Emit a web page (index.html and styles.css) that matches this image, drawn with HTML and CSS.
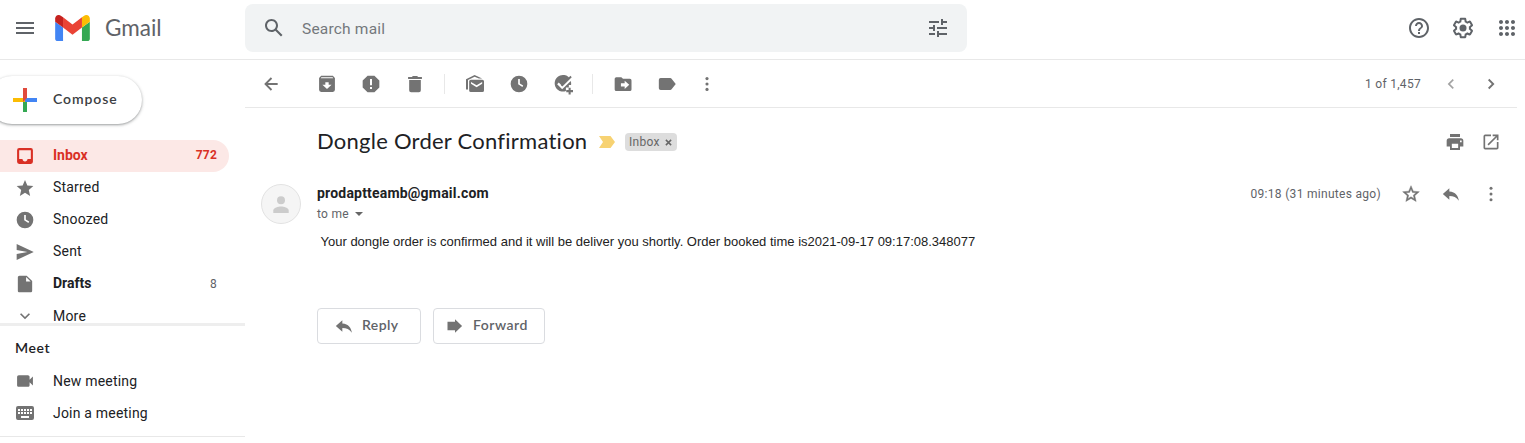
FILE: index.html
```html
<!DOCTYPE html>
<html lang="en">
<head>
<meta charset="utf-8">
<title>Gmail</title>
<link rel="stylesheet" href="styles.css">
</head>
<body>
<header class="header">
  <svg class="icon menu" viewBox="0 0 24 24"><path d="M3 18h18v-2H3v2zm0-5h18v-2H3v2zm0-7v2h18V6H3z"/></svg>
  <svg class="logo" viewBox="52 42 88 66"><path fill="#4285f4" d="M58 108h14V74L52 59v43c0 3.32 2.69 6 6 6"/><path fill="#34a853" d="M120 108h14c3.320 0 6-2.690 6-6V59l-20 15"/><path fill="#fbbc04" d="M120 48v26l20-15v-8c0-7.420-8.470-11.650-14.400-7.200"/><path fill="#ea4335" d="M72 74V48l24 18 24-18v26L96 92"/><path fill="#c5221f" d="M52 51v8l20 15V48l-5.600-4.200c-5.940-4.450-14.400-.22-14.400 7.200"/></svg>
  <span class="brand">Gmail</span>
  <div class="search">
    <svg class="icon i24" viewBox="0 0 24 24"><path d="M20.490 19l-5.730-5.730C15.530 12.200 16 10.910 16 9.500 16 5.910 13.090 3 9.500 3S3 5.910 3 9.500 5.910 16 9.500 16c1.410 0 2.700-.47 3.770-1.240L19 20.490 20.490 19zM5 9.500C5 7.010 7.010 5 9.500 5S14 7.010 14 9.500 11.990 14 9.500 14 5 11.990 5 9.500z"/></svg>
    <span class="search-text">Search mail</span>
    <svg class="icon i24 tune" viewBox="0 0 24 24"><path d="M3 17v2h6v-2H3zM3 5v2h10V5H3zm10 16v-2h8v-2h-8v-2h-2v6h2zM7 9v2H3v2h4v2h2V9H7zm14 4v-2H11v2h10zm-6-4h2V7h4V5h-4V3h-2v6z"/></svg>
  </div>
  <div class="header-tools">
    <svg class="icon i24" viewBox="0 0 24 24"><path d="M11 18h2v-2h-2v2zm1-16C6.480 2 2 6.480 2 12s4.480 10 10 10 10-4.480 10-10S17.520 2 12 2zm0 18c-4.410 0-8-3.590-8-8s3.590-8 8-8 8 3.590 8 8-3.590 8-8 8zm0-14c-2.210 0-4 1.790-4 4h2c0-1.100.9-2 2-2s2 .9 2 2c0 2-3 1.750-3 5h2c0-2.250 3-2.500 3-5 0-2.210-1.790-4-4-4z"/></svg>
    <svg class="icon i24" viewBox="0 0 24 24"><path d="M13.850 22.250h-3.700c-.74 0-1.360-.54-1.450-1.270l-.27-1.890c-.27-.14-.53-.29-.79-.46l-1.800.72c-.7.26-1.470-.03-1.810-.65L2.200 15.530c-.35-.66-.2-1.440.36-1.880l1.530-1.190c-.01-.15-.02-.3-.02-.46 0-.15.010-.31.020-.46l-1.520-1.190c-.59-.45-.74-1.260-.37-1.880l1.850-3.190c.34-.62 1.110-.9 1.790-.63l1.810.73c.26-.17.520-.32.780-.46l.27-1.910c.09-.7.710-1.250 1.440-1.250h3.700c.74 0 1.360.54 1.450 1.270l.27 1.890c.27.14.530.29.790.46l1.800-.72c.71-.26 1.480.03 1.820.65l1.840 3.180c.36.66.2 1.440-.36 1.880l-1.520 1.190c.01.15.020.3.020.46s-.01.31-.02.46l1.520 1.190c.56.45.720 1.230.370 1.860l-1.860 3.220c-.34.62-1.110.9-1.800.63l-1.800-.72c-.26.17-.52.320-.78.460l-.27 1.910c-.1.680-.72 1.220-1.460 1.220zm-3.230-2h2.760l.37-2.550.53-.22c.44-.18.880-.44 1.340-.78l.45-.34 2.380.96 1.380-2.400-2.030-1.580.07-.56c.03-.26.060-.51.060-.78s-.03-.53-.06-.78l-.07-.56 2.030-1.580-1.390-2.400-2.390.96-.45-.35c-.42-.32-.87-.58-1.330-.77l-.52-.22-.37-2.550h-2.760l-.37 2.550-.53.210c-.44.19-.88.440-1.340.790l-.45.330-2.380-.95-1.390 2.390 2.030 1.580-.07.560a7 7 0 0 0 0 1.560l.07.560-2.030 1.580 1.380 2.400 2.390-.96.45.350c.43.330.860.580 1.330.770l.53.220z"/><circle cx="12" cy="12" r="3.500"/></svg>
    <svg class="icon i24" viewBox="0 0 24 24"><path d="M6 8c1.100 0 2-.9 2-2s-.9-2-2-2-2 .9-2 2 .9 2 2 2zm6 12c1.100 0 2-.9 2-2s-.9-2-2-2-2 .9-2 2 .9 2 2 2zm-6 0c1.100 0 2-.9 2-2s-.9-2-2-2-2 .9-2 2 .9 2 2 2zm0-6c1.100 0 2-.9 2-2s-.9-2-2-2-2 .9-2 2 .9 2 2 2zm6 0c1.100 0 2-.9 2-2s-.9-2-2-2-2 .9-2 2 .9 2 2 2zm4-8c0 1.100.9 2 2 2s2-.9 2-2-.9-2-2-2-2 .9-2 2zm-4 2c1.100 0 2-.9 2-2s-.9-2-2-2-2 .9-2 2 .9 2 2 2zm6 6c1.100 0 2-.9 2-2s-.9-2-2-2-2 .9-2 2 .9 2 2 2zm0 6c1.100 0 2-.9 2-2s-.9-2-2-2-2 .9-2 2 .9 2 2 2z"/></svg>
  </div>
</header>
<div class="layout">
  <aside class="sidebar">
    <div class="compose">
      <svg class="plus" viewBox="0 0 24 24"><path fill="#34a853" d="M10 12h4v12h-4z"/><path fill="#4285f4" d="M12 10h12v4H12z"/><path fill="#fbbc04" d="M0 10h12v4H0z"/><path fill="#e04a3c" d="M10 0h4v10l-4 4z"/></svg>
      <span class="compose-text">Compose</span>
    </div>
    <nav class="nav">
      <div class="item active"><svg class="icon" viewBox="0 0 24 24"><path d="M19 2.500H5A2.500 2.500 0 0 0 2.500 5v14A2.500 2.500 0 0 0 5 21.500h14a2.500 2.500 0 0 0 2.500-2.500V5A2.500 2.500 0 0 0 19 2.500zM19 15.500h-4c0 1.660-1.340 3-3 3s-3-1.340-3-3H5V5h14v10.500z"/></svg><span class="label">Inbox</span><span class="count">772</span></div>
      <div class="item"><svg class="icon" viewBox="0 0 24 24"><path d="M12 17.770l6.180 3.730-1.640-7.030L22 9.740l-7.190-.61L12 2.500 9.190 9.130 2 9.740l5.460 4.730-1.640 7.030z"/></svg><span class="label">Starred</span></div>
      <div class="item"><svg class="icon" viewBox="0 0 24 24"><path fill-rule="evenodd" d="M12 2a10 10 0 1 0 0 20 10 10 0 0 0 0-20zM11 6h2v5.400l4 2.400-.9 1.700-5.100-3.100z"/></svg><span class="label">Snoozed</span></div>
      <div class="item"><svg class="icon" viewBox="0 0 24 24"><path d="M2 21.500L22.500 12 2 2.500v7.200L15 12 2 14.300z"/></svg><span class="label">Sent</span></div>
      <div class="item bold"><svg class="icon" viewBox="0 0 24 24"><path d="M14 2H5.500c-1.300 0-2.100.9-2.100 2v16c0 1.100.8 2 2.100 2h13c1.200 0 2.100-.9 2.100-2V8.500L14 2zm-.7 7V3.700L18.800 9z"/></svg><span class="label">Drafts</span><span class="count">8</span></div>
      <div class="item"><svg class="icon" viewBox="0 0 24 24"><path d="M7.410 8.590L12 13.170l4.590-4.580L18 10l-6 6-6-6z"/></svg><span class="label more-label">More</span></div>
    </nav>
    <section class="meet">
      <h2 class="meet-title">Meet</h2>
      <div class="item"><svg class="icon" viewBox="0 0 24 24"><path d="M17.500 10.480V7c0-1.100-.9-2-2-2H4.500a2 2 0 0 0-2 2v10c0 1.100.9 2 2 2h11c1.100 0 2-.9 2-2v-3.480l4 3.980v-11z"/></svg><span class="label">New meeting</span></div>
      <div class="item"><svg class="icon keyboard" viewBox="0 0 20 20"><path fill-rule="evenodd" d="M3 3h14a2 2 0 0 1 2 2v10a2 2 0 0 1-2 2H3a2 2 0 0 1-2-2V5a2 2 0 0 1 2-2zM3 6v2h2V6zm3 0v2h2V6zM9 6v2h2V6zM12 6v2h2V6zM15 6v2h2V6zM3 9v2h2V9zm3 0v2h2V9zm3 0v2h2V9zm3 0v2h2V9zm3 0v2h2V9zM6 13v2h8v-2z"/></svg><span class="label">Join a meeting</span></div>
    </section>
  </aside>
  <main class="main">
    <div class="toolbar">
      <svg class="icon back" viewBox="0 0 24 24"><path d="M20 10.800H8.200l5.220-5.220L11.800 4l-8 8 8 8 1.620-1.580L8.200 13.200H20z"/></svg>
      <div class="group">
        <svg class="icon" viewBox="0 0 24 24"><path fill-rule="evenodd" d="M5 2.200h14l2.500 2.600V19a2.500 2.500 0 0 1-2.500 2.500H5A2.500 2.500 0 0 1 2.500 19V4.800zM5.300 4l-.8 1h15l-.8-1zM10 10v3H6.500l5.500 5 5.500-5H14v-3z"/></svg>
        <svg class="icon" viewBox="0 0 24 24"><path fill-rule="evenodd" d="M7.900 2h8.200L22 7.900v8.200L16.100 22H7.900L2 16.100V7.900zM10.800 6v7.500h2.400V6zm0 9.500V18h2.400v-2.500z"/></svg>
        <svg class="icon" viewBox="0 0 24 24"><path d="M5 19.500a2.300 2.300 0 0 0 2.300 2.300h9.400a2.300 2.300 0 0 0 2.300-2.300V7.200H5zM15.800 3.600L14.500 2.300h-5L8.200 3.600H3.700V6h16.600V3.600z"/></svg>
      </div>
      <i class="divider"></i>
      <div class="group">
        <svg class="icon" viewBox="0 0 24 24"><path fill-rule="evenodd" d="M1.200 18.500V6.200L11.500 1.200 20.500 5.500h-3.800l-5.200-2.200-7.900 4V18.500zM7 6.800h13.800a2 2 0 0 1 2 2v10.900a2 2 0 0 1-2 2H7a2 2 0 0 1-2-2V8.800a2 2 0 0 1 2-2zM7.200 9.500v2.300l6.700 4 6.700-4V9.500l-6.700 4z"/></svg>
        <svg class="icon" viewBox="0 0 24 24"><path fill-rule="evenodd" d="M12 2a10 10 0 1 0 0 20 10 10 0 0 0 0-20zM11 6h2v5.400l4 2.400-.9 1.700-5.100-3.100z"/></svg>
        <svg class="icon task" viewBox="0 0 24 24"><path d="M18.300 4.200A10 10 0 1 0 15.500 21.300v-4.200h3.500v-3h2.700a10 10 0 0 0-.4-5L11 19l-6-6 1.900-1.900 4.100 4.100L20 6.200z" transform="translate(0 -.8)"/><path d="M20.900 2.200l1.600 1.600L11.200 15.100l-1.600-1.600zM18.700 16.500h2.500v2.800h2.800v2.500h-2.800v2.800h-2.500v-2.800h-2.800v-2.500h2.800z"/></svg>
      </div>
      <i class="divider"></i>
      <div class="group">
        <svg class="icon" viewBox="0 0 24 24"><path fill-rule="evenodd" d="M20 5.800h-8l-2-2H4a2 2 0 0 0-2 2V18.500a2 2 0 0 0 2 2h16.200a2 2 0 0 0 2-2V7.800a2 2 0 0 0-2.200-2zM14 18v-3H9.500v-4H14V8l5.500 5z"/></svg>
        <svg class="icon" viewBox="0 0 24 24"><path d="M17.500 5.700c-.35-.5-.95-.9-1.600-.9H4.400a2.300 2.300 0 0 0-2.200 2.200v10a2.300 2.300 0 0 0 2.200 2.200h11.500c.65 0 1.250-.4 1.600-.9L22.500 12z"/></svg>
        <svg class="icon dots" viewBox="0 0 24 24"><circle cx="12" cy="5.500" r="1.900"/><circle cx="12" cy="12" r="1.900"/><circle cx="12" cy="18.500" r="1.900"/></svg>
      </div>
      <div class="pager"><span class="pager-text">1 of 1,457</span><svg class="icon dim" viewBox="0 0 24 24"><path d="M15.410 7.410L14 6l-6 6 6 6 1.410-1.410L10.830 12z"/></svg><svg class="icon" viewBox="0 0 24 24"><path d="M10 5.800L8.400 7.410 12.990 12l-4.590 4.590L10 18.200l6.200-6.200z"/></svg></div>
    </div>
    <div class="subject-row">
      <h1 class="subject">Dongle Order Confirmation</h1>
      <svg class="important" viewBox="0 0 16 12"><path fill="#f7d272" d="M0 0h11.500L16 6l-4.500 6H0l4-6z"/></svg>
      <span class="chip">Inbox<svg class="close" viewBox="0 0 8 8"><path d="M1 1l6 6M7 1L1 7"/></svg></span>
      <div class="row-tools">
        <svg class="icon" viewBox="0 0 24 24"><path fill-rule="evenodd" d="M6 2.500h12V6H6zM5 7.500h14a3 3 0 0 1 3 3v7h-4v4H6v-4H2v-7a3 3 0 0 1 3-3zM8.200 14v5.300h7.600V14zM18 10.200v2h2v-2z"/></svg>
        <svg class="icon" viewBox="0 0 24 24"><path d="M19 19H5V5h7V3H5a2 2 0 0 0-2 2v14a2 2 0 0 0 2 2h14c1.100 0 2-.9 2-2v-7h-2v7zM14 3v2h3.590l-9.830 9.830 1.410 1.410L19 6.410V10h2V3h-7z"/></svg>
      </div>
    </div>
    <article class="message">
      <svg class="avatar" viewBox="0 0 40 40"><circle cx="20" cy="20" r="19.500" fill="#f5f5f5" stroke="#e2e2e2"/><circle cx="20" cy="16.200" r="4" fill="#ccc"/><path fill="#ccc" d="M12.300 29v-2.500c0-2.700 5-4 7.700-4s7.700 1.300 7.700 4V29z"/></svg>
      <div class="content">
        <div class="sender-row">
          <span class="sender">prodaptteamb@gmail.com</span>
          <div class="meta"><span class="date">09:18 (31 minutes ago)</span>
            <svg class="icon" viewBox="0 0 24 24"><path d="M22 9.240l-7.190-.62L12 2 9.190 8.630 2 9.240l5.460 4.730L5.820 21 12 17.270 18.180 21l-1.630-7.030L22 9.240zM12 15.400l-3.760 2.270 1-4.280-3.320-2.880 4.380-.38L12 6.100l1.710 4.040 4.380.38-3.320 2.880 1 4.280L12 15.400z" stroke="#737373" stroke-width=".5"/></svg>
            <svg class="icon" viewBox="0 0 24 24"><path d="M10 9V5l-7.800 7 7.800 7v-4.600c5 0 8.500 1.600 11.500 5.600-1-5.500-4-10.500-11.500-11z"/></svg>
            <svg class="icon" viewBox="0 0 24 24"><circle cx="12" cy="5" r="1.800"/><circle cx="12" cy="12" r="1.800"/><circle cx="12" cy="19" r="1.800"/></svg>
          </div>
        </div>
        <div class="recipient">to me<i class="caret"></i></div>
        <p class="body">Your dongle order is confirmed and it will be deliver you shortly. Order booked time is2021-09-17 09:17:08.348077</p>
        <div class="actions">
          <div class="btn reply"><svg class="icon" viewBox="0 0 24 24"><path d="M10 9V5l-7.800 7 7.800 7v-4.600c5 0 8.500 1.600 11.500 5.600-1-5.500-4-10.500-11.500-11z"/></svg><span class="btn-text">Reply</span></div>
          <div class="btn forward"><svg class="icon" viewBox="0 0 24 24"><path d="M3 7h9V4l8.500 8-8.500 8v-3H3z"/></svg><span class="btn-text">Forward</span></div>
        </div>
      </div>
    </article>
  </main>
</div>
</body>
</html>
```
FILE: styles.css
```css
* { box-sizing: border-box; }
body { margin: 0; height: 443px; overflow: hidden; background: #fff; color: #202124; font-family: Roboto, sans-serif; }
.icon { width: 20px; height: 20px; fill: #737373; flex: none; display: block; }
.i24 { width: 24px; height: 24px; }

.header { height: 60px; border-bottom: 1px solid #e8e8e8; display: flex; align-items: flex-start; }
.header .icon { fill: #5f6368; }
.header .menu { width: 24px; height: 24px; margin: 16px 0 0 13px; }
.logo { width: 35px; height: 26px; margin: 15px 0 0 18px; }
.brand { font: 22.500px/28px Lato, sans-serif; color: #5f6368; width: 60px; margin: 14px 0 0 15px; }
.search { margin: 4px 0 0 80px; width: 722px; height: 48px; border-radius: 8px; background: #f1f3f4; display: flex; align-items: center; padding: 0 17px; }
.search-text { font-size: 15.500px; color: #74787c; margin-left: 16px; letter-spacing: .2px; padding-top: 1px; }
.tune { margin-left: auto; }
.header-tools { display: flex; gap: 20px; margin: 16px 6px 0 auto; }

.layout { display: flex; }
.sidebar { width: 245px; height: 383px; display: flex; flex-direction: column; }
.compose { margin: 16px 0 0 -12px; width: 154px; height: 48px; border-radius: 24px; box-shadow: 0 1px 2px rgba(60,64,67,.35), 0 1px 3px 1px rgba(60,64,67,.15); display: flex; align-items: center; padding-left: 25px; }
.plus { width: 24px; height: 24px; margin-right: 16px; }
.compose-text { font: 600 14px/20px Lato, sans-serif; color: #3c4043; letter-spacing: .9px; padding-bottom: 2px; }
.nav { margin-top: 16px; height: 183px; overflow: hidden; }
.item { height: 32px; width: 229px; padding: 0 12px 0 15px; display: flex; align-items: center; font-size: 14px; letter-spacing: .2px; color: #202124; }
.label { margin-left: 18px; }
.count { margin-left: auto; font-size: 12px; color: #5f6368; }
.nav .label, .nav .count { padding-bottom: 2px; }
.nav .more-label, .nav .bold .count { padding-bottom: 0; }
.active { background: #fce8e6; border-radius: 0 16px 16px 0; color: #d93025; font-weight: 700; }
.active .icon { fill: #d93025; }
.active .label { letter-spacing: 0; }
.active .count { color: #d93025; }
.bold { font-weight: 700; }
.bold .label { letter-spacing: 0; }
.bold .count { font-weight: 400; }
.meet { height: 114px; border-top: 3px solid #eee; border-bottom: 1px solid #e8e8e8; flex: none; }
.meet-title { font: 600 14px/20px Lato, sans-serif; letter-spacing: .6px; margin: 12px 0 7px 15px; }

.main { flex: 1; min-width: 0; }
.toolbar { height: 48px; margin-right: 8px; border-bottom: 1px solid #e8e8e8; display: flex; align-items: center; padding: 1px 16px 0; }
.back { margin-right: 36px; }
.group { display: flex; gap: 24px; }
.divider { width: 1px; height: 20px; background: #e8e8e8; margin: 0 20px 0 19px; }
.dots { margin-left: -4px; }
.task { overflow: visible; }
.pager { margin-left: auto; display: flex; align-items: center; gap: 20px; }
.pager-text { font-size: 12px; color: #5f6368; letter-spacing: .3px; }
.dim { opacity: .65; }
.subject-row { height: 68px; padding: 0 24px 0 72px; display: flex; align-items: center; }
.subject { font: 400 22px/28px Lato, sans-serif; margin: 0; padding-bottom: 2px; width: 270px; white-space: nowrap; letter-spacing: .25px; }
.important { width: 16px; height: 12px; margin-left: 12px; }
.chip { display: flex; align-items: center; gap: 5px; height: 18px; margin-left: 10px; padding: 0 5px 0 4px; border-radius: 4px; background: #ddd; color: #666; font-size: 12px; letter-spacing: .3px; }
.close { width: 7px; height: 7px; stroke: #666; stroke-width: 1.700; fill: none; }
.row-tools { display: flex; gap: 16px; margin-left: auto; }
.message { display: flex; gap: 16px; padding: 8px 24px 0 16px; }
.avatar { width: 40px; height: 40px; flex: none; }
.content { flex: 1; }
.sender-row { height: 20px; display: flex; align-items: center; justify-content: space-between; }
.sender { font-size: 14px; font-weight: 700; letter-spacing: .2px; padding-bottom: 2px; }
.meta { display: flex; align-items: center; gap: 20px; }
.date { font-size: 12px; color: #5f6368; letter-spacing: .3px; }
.recipient { height: 20px; display: flex; align-items: center; font-size: 12px; letter-spacing: .3px; color: #5f6368; }
.caret { border: 4px solid transparent; border-top-color: #666; margin: 4px 0 0 6px; }
.body { font: 13px/20px "Liberation Sans", Arial, sans-serif; color: #222; margin: 8px 0 0 3.500px; white-space: nowrap; }
.actions { display: flex; gap: 12px; margin-top: 56px; }
.btn { height: 36px; border: 1px solid #dadce0; border-radius: 4px; display: flex; align-items: center; font: 600 14px/20px Lato, sans-serif; letter-spacing: .5px; color: #5f6368; }
.btn-text { padding-bottom: 2px; }
.reply { width: 104px; padding-left: 16px; gap: 8px; letter-spacing: .4px; }
.forward { width: 112px; padding-left: 11px; gap: 8px; }
```
